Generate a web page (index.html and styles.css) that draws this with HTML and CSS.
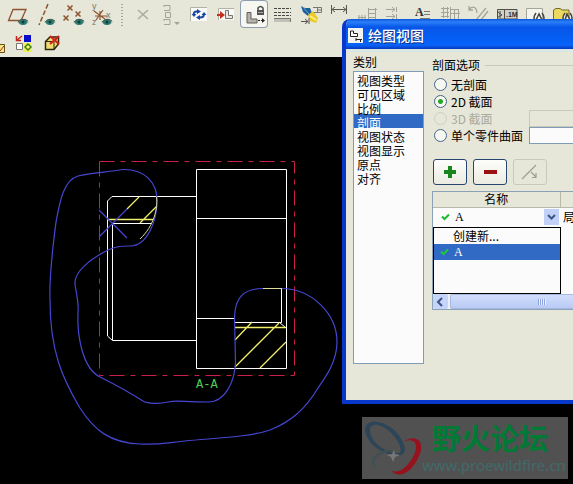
FILE: index.html
```html
<!DOCTYPE html>
<html lang="zh-CN">
<head>
<meta charset="utf-8">
<title>绘图视图</title>
<link rel="stylesheet" href="styles.css">
</head>
<body>
<svg class="defs" aria-hidden="true">
  <defs>
    <g id="eye">
      <path d="M-6 0Q0-5 6 0Q0 6-6 0Z" fill="#9bb5a8"/>
      <ellipse rx="4" ry="3" fill="#2b7a70"/>
      <circle r="1.5" fill="#123c3c"/>
      <path d="M-5 0Q0-5 5-1" fill="none" stroke="#44584c"/>
    </g>
    <path id="cross" d="M-2.500-2.500L2.500 2.500M2.500-2.500L-2.500 2.500" fill="none" stroke="#8b5430" stroke-width="1.500"/>
  </defs>
</svg>
<header class="toolbars">
  <div class="toolbar" role="toolbar">
    <button class="tool" aria-label="基准平面"><svg viewBox="0 0 28 28"><path d="M9 9.500H22L17 20.500H4.500Z" fill="none" stroke="#8b5430" stroke-width="1.300"/><use href="#eye" x="19" y="22"/></svg></button>
    <button class="tool" aria-label="基准轴"><svg viewBox="0 0 28 28"><path d="M16 4L7 25" fill="none" stroke="#8b5430" stroke-width="1.500" stroke-dasharray="5 2"/><use href="#eye" x="18" y="22"/></svg></button>
    <button class="tool" aria-label="基准点"><svg viewBox="0 0 28 28"><use href="#cross" x="10" y="8"/><use href="#cross" x="6" y="18"/><use href="#cross" x="18" y="14"/><use href="#eye" x="19" y="22"/></svg></button>
    <button class="tool" aria-label="坐标系"><svg viewBox="0 0 28 28"><path d="M6 11L17 19M8 20L15 10M12 11V20M7 16H19" fill="none" stroke="#8b5430" stroke-width="1.200"/><text x="4" y="9" class="axis">y</text><text x="18" y="18" class="axis">x</text><text x="4" y="25" class="axis">z</text><use href="#eye" x="19" y="22"/></svg></button>
    <span class="separator"></span>
    <button class="tool" aria-label="删除"><svg viewBox="0 0 28 28"><path d="M10 10L20 19M20 10L10 19" stroke="#a9a99f" stroke-width="1.500"/></svg></button>
    <button class="tool" aria-label="对齐"><svg viewBox="0 0 28 28" fill="none" stroke="#a3a399"><path d="M8 5.500H14V10.500H8M9.500 12.500H14.500V17.500H9.500ZM8 19.500H14V24.500H8M8 7V5M8 21V19"/><path d="M18 22H24L21 25Z" fill="#a3a399" stroke="none"/></svg></button>
    <button class="tool" aria-label="更新"><svg viewBox="0 0 28 28"><path d="M6 7H23V21H6Z" fill="#f9f9f7"/><path d="M6.500 21V7.500H23" fill="none" stroke="#b1b1a5"/><path d="M10 15Q9 11.500 13 11.500M20 14Q20 17.500 16 17.500" fill="none" stroke="#1d45a4" stroke-width="2"/><path d="M13 9L17 11.500L13 14ZM16 15L12 17.500L16 20Z" fill="#1d45a4"/><path d="M7.500 14H12.500L10 17ZM17.500 15L20 12L22.500 15Z" fill="#1d45a4"/></svg></button>
    <button class="tool" aria-label="插入视图"><svg viewBox="0 0 28 28"><path d="M6 8H22V20H6Z" fill="#f9f9f7"/><path d="M6.500 20V8.500H22" fill="none" stroke="#b1b1a5"/><path d="M5 15H10" stroke="#c3301d" stroke-width="2"/><path d="M8 11L13 15L8 19Z" fill="#c3301d"/><path d="M13.500 10.500H16.500V15.500H20.500V18.500H13.500Z" fill="#e7e7df" stroke="#77736c"/></svg></button>
    <button class="tool pressed" aria-label="锁定视图"><svg viewBox="0 0 28 28"><path d="M7 12.500H11V19H17V23H7Z" fill="#b5b1ab" stroke="#655f5b"/><path d="M18 10V8Q20.500 5 23 8V10" fill="none" stroke="#4a4a48" stroke-width="1.500"/><path d="M17 10H24V15H17Z" fill="#55534f"/><path d="M18 12.500H23" stroke="#aaa"/><path d="M18 20.500H23" stroke="#222" stroke-dasharray="2 1"/><path d="M22 18L25 20.500L22 23Z" fill="#222"/></svg></button>
    <button class="tool" aria-label="线型"><svg viewBox="0 0 28 28"><path d="M6 8.500H23M6 12.500H23M6 15.500H23" stroke="#484844" stroke-dasharray="3 1"/><path d="M6 18.500H22.500V22H6Z" fill="#c2c1b8"/><path d="M6 18.500H22.500V22" fill="none" stroke="#77756e"/></svg></button>
    <button class="tool" aria-label="显示"><svg viewBox="0 0 28 28"><path d="M5 6L9 8L14 8L16 13L12 16L7 12Z" fill="#1f5f9d"/><path d="M7 7L13 14" stroke="#63a7d8"/><path d="M12 15L17 11L22 18L20 23L14 21Z" fill="#e9ca27"/><path d="M14 16L20 20" stroke="#fff083" stroke-width="2"/><path d="M17 7.500H25.500V12.500H18M21.500 8V12M22 10H25" fill="none" stroke="#77756d"/><path d="M5 21.500H12M9 19L12 21.500L9 24M13 18V24" fill="none" stroke="#55524c"/></svg></button>
    <button class="tool" aria-label="尺寸"><svg viewBox="0 0 28 28" fill="none" stroke="#575750"><path d="M7.500 5V14M22.500 5V14M8 9.500H22M11 7L8 9.500L11 12M19 7L22 9.500L19 12"/></svg></button>
    <button class="tool" aria-label="注释"><svg viewBox="0 0 28 28" fill="none" stroke="#a3a399"><path d="M6 17.500H14M7 15V19M10 15V19M13 15V19M16.500 8V19M23.500 8V19M16 9.500H25M17 13.500H24M17 17.500H24"/></svg></button>
    <button class="tool" aria-label="公差"><svg viewBox="0 0 28 28" fill="none" stroke="#a3a399"><path d="M6 9.500H15M12 7L15 9.500L12 12M16.500 7V12M6 16.500H15M12 14L15 16.500L12 19M16.500 14V19"/></svg></button>
    <button class="tool" aria-label="文本样式"><svg viewBox="0 0 28 28"><text x="7" y="16" class="letter">A</text><path d="M16 11.500H22M16 14.500H22M12 18.500H22" stroke="#77776f"/></svg></button>
    <button class="tool" aria-label="表格"><svg viewBox="0 0 28 28" fill="none" stroke="#a3a399"><path d="M5 8.500H13M5 12.500H13M5 16.500H13M7.500 7V18M11.500 7V18M15 9.500H22M15 13.500H24M14.500 7V20M18.500 9V20M22.500 9V20"/></svg></button>
    <button class="tool" aria-label="重复"><svg viewBox="0 0 28 28" fill="none" stroke="#a3a399"><path d="M5 9Q12 4 13 13M5 6V10H9M12 20L22 8M17 20L24 11" stroke-width="1.300"/></svg></button>
    <button class="tool" aria-label="格式"><svg viewBox="0 0 28 28"><path d="M5.500 9.500H25V19H5.500ZM12.500 9V19" fill="#d1d1c7" stroke="#4f4f49"/><text x="14" y="17" class="digits">.1M</text><path d="M6 12L10 15L6 17M8 11V18" fill="none" stroke="#4f4f49"/></svg></button>
    <button class="tool" aria-label="预览"><svg viewBox="0 0 28 28"><path d="M6.500 8.500H22.500V24H6.500Z" fill="#f5f5ef" stroke="#a4a498"/><path d="M16 13Q12 18 16 23M22 13Q26 18 22 23M19 14L16 20H22Z" fill="none" stroke="#45453f" stroke-width="1.500"/></svg></button>
    <button class="tool" aria-label="打开"><svg viewBox="0 0 28 28"><path d="M5.500 10L8 8.500H12L14 10H21V21H5.500Z" fill="#ecd95d" stroke="#77672a"/><path d="M17 13Q13 18 17 23M22 13Q26 18 22 23M19 14L17 20H22Z" fill="#eee" stroke="#45453f" stroke-width="1.500"/></svg></button>
  </div>
  <div class="toolbar second" role="toolbar">
    <button class="tool" aria-label="编辑"><svg viewBox="0 0 28 28"><path d="M14 15.500H22.500V23.500H14Z" fill="#f3e887" stroke="#6a5019"/><path d="M16 20L18 22L22 17" fill="none" stroke="#b62116"/></svg></button>
    <button class="tool" aria-label="替换"><svg viewBox="0 0 28 28"><path d="M14 6H21V13H14Z" fill="#0a0aca"/><path d="M6.500 14.500H12.500V20.500H6.500Z" fill="#fff" stroke="#777"/><path d="M13 14H22V23H13Z" fill="#f0f05c"/><path d="M18 15L21 18L18 21L15 18Z" fill="#fcfc79" stroke="#3b811d" stroke-width="1.500"/><path d="M12 7L7 11M6.500 7V11.500H11" fill="none" stroke="#c1251d" stroke-width="1.500"/></svg></button>
    <button class="tool" aria-label="移除零件"><svg viewBox="0 0 28 28"><path d="M7.500 12.500L12 8H20.500V15L16 20.500H7.500Z" fill="#f1dc72" stroke="#2d250e" stroke-width="1.500"/><path d="M7.500 12.500H16V20.500M16 12.500L20.500 8" fill="none" stroke="#2d250e"/><path d="M12 7L21 15M21 7L12 15" stroke="#d2201b" stroke-width="2"/></svg></button>
  </div>
</header>

<main class="canvas">
  <svg class="drawing" viewBox="0 57 343 427" role="img" aria-label="零件剖面图">
    <path class="limit" d="M99.500 161.500H294.500V375.500M99.500 161.500V375.500H294.500"/>
    <path class="edge" d="M196 196.500H112L107.500 201V336L112.500 340.500H196M112.500 340V223.500H151M196.500 169.500H286.500V368.500H196.500ZM196 218.500H286M196 318.500H235M235 322.500H281.500V289M279 322L286 328"/>
    <path class="hatch" d="M107 219.500H153M139 197L127 209M157 206L140 223M235 327.500H286M235 340L252 322M235 367L279 323M260 368L286 342"/>
    <path class="spline" d="M99 237L127 209M99 210L127 238M123 169.500C145 169 157 183 157 200C157 222 147 246 130 246C122 246 117 246 108 250C90 259 74 272 75 284C76 294 79 300 78 312C77 335 82 368 100 377C112 383 132 394 143 401C148 404 160 404 168 402C178 400 182 402 208 402C226 402 235 380 235.500 362L234.500 317C235 298 243 289 262 288.500H280C312 288 337 314 337 342C337 362 325 378 318 388C305 410 290 422 270 430C250 437 215 438 185 441C165 443 160 445 140 444C110 443 94 430 80 408C62 378 50 350 50 300C49 275 53 245 56 222C60 200 64 180 78 176C90 173 108 172 123 169.500Z"/>
    <path class="cut" d="M156.500 197C158 208 154 226 140 239M263 288.500H282"/>
    <text class="view-name" x="196" y="388">A-A</text>
  </svg>
  <aside class="watermark">
    <svg class="logo" viewBox="0 0 60 62" aria-hidden="true">
      <path fill-rule="evenodd" fill="#2c4558" d="M3 12C6 0 22 4 33 14C43 24 46 36 39 38C27 40 4 30 3 12ZM8 15C10 28 28 37 37 36C42 34 36 22 28 15C18 6 7 5 8 15Z"/>
      <path fill="#96121c" d="M42 24C56 16 63 26 57 39C50 56 36 63 29 53C35 58 46 51 52 38C57 26 52 21 42 24Z"/>
      <path fill="#3f5052" d="M32 34C15 35 7 46 16 51C7 50 8 40 18 35Q26 31 32 34Z"/>
      <path fill="#777" d="M30 37L32 33L33 37L38 38L33 40L31 45L29 40L25 38Z"/>
    </svg>
    <div class="brand"><strong>野火论坛</strong><span>www.proewildfire.cn</span></div>
  </aside>
</main>

<section class="dialog" role="dialog" aria-labelledby="dialog-title">
  <div class="titlebar">
    <svg class="app-icon" viewBox="0 0 15 15" aria-hidden="true"><path d="M0 0H15V15H0Z" fill="#f2f4ef"/><path d="M2.500 3V8.500H9.500V5.500H5.500V3Z" fill="#fff" stroke="#222"/><path d="M8 11.500H14M8 10V13M12.500 11V14" fill="none" stroke="#222"/></svg>
    <h1 id="dialog-title">绘图视图</h1>
  </div>
  <div class="dialog-body">
    <div class="categories">
      <label for="category">类别</label>
      <select id="category" size="20">
        <option>视图类型</option><option>可见区域</option><option>比例</option><option selected>剖面</option><option>视图状态</option><option>视图显示</option><option>原点</option><option>对齐</option>
      </select>
    </div>
    <div class="options">
      <fieldset>
        <legend>剖面选项</legend>
        <div class="choice"><input type="radio" name="section" id="none"><label for="none">无剖面</label></div>
        <div class="choice"><input type="radio" name="section" id="two" checked><label for="two">2D 截面</label></div>
        <div class="choice"><input type="radio" name="section" id="three" disabled><label for="three">3D 截面</label><input type="text" class="field" aria-label="3D 截面" disabled></div>
        <div class="choice"><input type="radio" name="section" id="part"><label for="part">单个零件曲面</label><input type="text" class="field" aria-label="单个零件曲面"></div>
      </fieldset>
      <div class="actions">
        <button class="action" aria-label="添加"><svg viewBox="0 0 32 24"><path d="M16 6V18M10 12H22" stroke="#17861c" stroke-width="4"/></svg></button>
        <button class="action" aria-label="移除"><svg viewBox="0 0 32 24"><path d="M10 12H23" stroke="#9c1014" stroke-width="4"/></svg></button>
        <button class="action" aria-label="反向" disabled><svg viewBox="0 0 32 24"><path d="M8 19L22 5M17 12L22 17M22 13V17.500H18" fill="none" stroke="#9d9d94" stroke-width="1.200"/></svg></button>
      </div>
      <div class="grid">
        <table>
          <thead><tr><th class="name">名称</th><th></th></tr></thead>
          <tbody><tr>
            <td class="name"><div class="combo">
              <svg class="tick" viewBox="0 0 9 8"><path d="M1 3.500L3.500 6L8 1.500" fill="none" stroke="#20b832" stroke-width="2"/></svg>
              <select aria-label="名称"><option>A</option></select>
              <svg class="arrow" viewBox="0 0 15 16"><path d="M0 0H15V16H0Z" fill="#c1d1f7"/><path d="M4 6L7.500 9.500L11 6" fill="none" stroke="#3d5584" stroke-width="2"/></svg>
              <div class="menu" role="listbox">
                <button class="item" role="option">创建新...</button>
                <button class="item chosen" role="option" aria-selected="true"><svg class="tick" viewBox="0 0 9 8"><path d="M1 3.500L3.500 6L8 1.500" fill="none" stroke="#20c83d" stroke-width="2"/></svg><span>A</span></button>
              </div>
            </div></td>
            <td class="region">局</td>
          </tr></tbody>
        </table>
        <div class="scrollbar">
          <button class="scroll-left" aria-label="向左滚动"><svg viewBox="0 0 15 14"><path d="M9 3L5 7L9 11" fill="none" stroke="#3d5584" stroke-width="2"/></svg></button>
          <div class="thumb"><i></i></div>
        </div>
      </div>
    </div>
  </div>
</section>
</body>
</html>
```

FILE: styles.css
```css
* { box-sizing: border-box; }
html, body { height: 100%; }
body {
  margin: 0;
  display: flex;
  flex-direction: column;
  position: relative;
  overflow: hidden;
  background: #000;
  color: #000;
  font: 12px/14px "Noto Sans CJK SC", sans-serif;
}
button, input, select { font: inherit; color: inherit; margin: 0; padding: 0; }
svg { display: block; }
.defs { position: absolute; width: 0; height: 0; }

.toolbars { flex: none; background: #e7e7d9; overflow: hidden; }
.toolbar { display: flex; padding-left: 4px; height: 28px; }
.toolbar.second { height: 29px; padding-left: 0; padding-top: 1px; margin-left: -18px; }
.tool { flex: none; width: 28px; height: 28px; border: 0; background: none; }
.tool svg { width: 28px; height: 28px; }
.tool.pressed { background: #f7f7f2; border-radius: 4px; box-shadow: inset 0 0 0 1px #8d9dae; }
.separator { flex: none; width: 12px; margin: 3px 0 0; background: radial-gradient(circle, #a6a69b 1px, transparent 1px) center top / 12px 3px repeat-y; }
.axis { font: 9px "Liberation Sans", sans-serif; fill: #777770; }
.letter { font: bold 12px "Liberation Serif", serif; fill: #333; }
.digits { font: bold 7px "Liberation Sans", sans-serif; fill: #333; }

.canvas { flex: 1; min-height: 0; position: relative; overflow: hidden; }
.drawing { width: 343px; height: 427px; fill: none; }
.limit { stroke: #c92049; stroke-dasharray: 15 6 5 6; }
.edge { stroke: #fff; }
.hatch { stroke: #efef6a; stroke-width: 1.3; }
.spline { stroke: #4646d2; stroke-width: 1.2; }
.cut { stroke: #dcdc9c; }
.view-name { font: 12px "Liberation Mono", monospace; fill: #4fd04f; }

.watermark {
  position: absolute;
  right: 5px;
  bottom: 5px;
  height: 62px;
  display: flex;
  width: 206px;
  background: #515151;
}
.logo { flex: none; width: 60px; height: 62px; }
.brand { flex: 1; display: flex; flex-direction: column; white-space: nowrap; }
.brand strong { padding: 2px 0 0 10px; font-size: 29px; line-height: 36px; color: #007a34; }
.brand span { padding: 2px 0 0 -2px; font: 15px/20px "Noto Sans", sans-serif; color: #416a69; }

.dialog {
  position: absolute;
  left: 342px;
  right: -8px;
  top: 19px;
  border: 4px solid #0738c9;
  border-top: 0;
  border-radius: 8px 8px 0 0;
  background: #e7e7d9;
  overflow: hidden;
}
.titlebar {
  display: flex;
  align-items: center;
  gap: 5px;
  height: 30px;
  margin-left: -4px;
  padding: 2px 0 0 6px;
  background: linear-gradient(#0b56d8, #2a80fb 3px, #0756e8 8px, #0560f6 22px, #0964fb 26px, #0539bb);
  color: #fff;
}
.app-icon { width: 15px; height: 15px; }
h1 { margin: 0; font-size: 14px; line-height: 20px; font-weight: 500; text-shadow: 1px 1px #06328e; }
.dialog-body { display: flex; gap: 8px; height: 351px; padding: 5px 0 0 7px; border-top: 3px solid #d9e8e5; }
.categories { flex: none; display: flex; flex-direction: column; gap: 1px; width: 71px; height: 310px; margin-top: -3px; }
.categories label { line-height: 16px; }
.categories select {
  flex: 1;
  min-height: 0;
  width: 100%;
  overflow: hidden;
  padding: 0;
  border: 1px solid #7f9db9;
  border-radius: 0;
  background: #fbfbfb;
  outline: 0;
}
.categories option { min-height: 14px; height: 14px; padding: 0 3px; line-height: 14px; color: #000; }
.categories option:checked { background: #316ac5 linear-gradient(#316ac5, #316ac5); color: #fff; }

.options { flex: 1; min-width: 0; }
fieldset { margin: 0; padding: 0; border: 0; }
legend { display: flex; align-items: center; gap: 5px; width: 100%; padding: 0; margin-bottom: 3px; line-height: 16px; }
legend::after { content: ""; flex: 1; height: 1px; background: #c9c9ba; }
.choice { display: flex; align-items: center; gap: 4px; height: 17px; padding-left: 2px; }
.choice label { line-height: 17px; white-space: nowrap; }
.choice input[type="radio"] {
  appearance: none;
  flex: none;
  width: 13px;
  height: 13px;
  border: 1px solid #43668e;
  border-radius: 50%;
  background: #f7f7f2;
}
.choice input:checked { background: radial-gradient(circle, #2ca52c 2px, #f7f7f2 3px); }
.choice input:disabled { border-color: #cfcfc0; background: #e7e7d9; }
.choice input:disabled + label { color: #a9a99c; }
.choice .field { flex: none; width: 48px; height: 17px; margin-left: auto; border: 1px solid #7f9db9; background: #fbfbfb; }
.choice .field:disabled { border-color: #c9c9ba; background: #e7e7d9; }

.actions { display: flex; gap: 6px; padding: 15px 0 6px 1px; }
.action { width: 34px; height: 26px; border: 1px solid #26466f; border-radius: 3px; background: linear-gradient(#fdfdfb, #ecebe2); }
.action svg { width: 32px; height: 24px; }
.action:disabled { border-color: #c9c9ba; background: #e7e7d9; }

.grid { height: 119px; border: 1px solid #8ba1b6; border-right: 0; background: #fbfbfb; display: flex; flex-direction: column; }
table { width: 100%; border-collapse: collapse; table-layout: fixed; }
th, td { padding: 0; }
th { height: 15px; line-height: 14px; font-weight: normal; background: #e7e7d9; border-bottom: 1px solid #b9b9a9; }
th + th { border-left: 1px solid #b9b9a9; }
.name { width: 127px; }
.region { padding-left: 3px; white-space: nowrap; }
.combo { position: relative; display: flex; align-items: center; gap: 3px; height: 19px; padding-left: 8px; }
.combo select { appearance: none; flex: 1; min-width: 0; height: 16px; padding: 0 2px; border: 0; background: none; font: 12px/16px "Liberation Serif", serif; }
.tick { flex: none; width: 9px; height: 8px; }
.arrow { flex: none; width: 15px; height: 16px; margin-right: 1px; }
.menu { position: absolute; left: 0; right: -1px; top: 19px; height: 67px; border: 1px solid #000; background: #fbfbfb; }
.item { display: flex; align-items: center; gap: 5px; width: 100%; height: 16px; padding-left: 19px; border: 0; background: none; line-height: 16px; text-align: left; }
.item.chosen { padding-left: 6px; background: #316ac5; color: #fff; }
.item span { font-family: "Liberation Serif", serif; }
.scrollbar { display: flex; gap: 2px; height: 15px; margin-top: auto; background: #eeeef3; }
.scroll-left { flex: none; width: 15px; border: 0; border-radius: 2px; background: #c5d4f8; }
.scroll-left svg { width: 15px; height: 14px; }
.thumb { flex: 1; display: flex; align-items: center; padding-left: 87px; border: 1px solid #a5b9e2; border-radius: 2px; background: linear-gradient(#d2defb, #b8caf5); }
.thumb i { width: 8px; height: 6px; background: repeating-linear-gradient(90deg, #8da4dc 0 1px, #e9f0ff 1px 2px); }
```
